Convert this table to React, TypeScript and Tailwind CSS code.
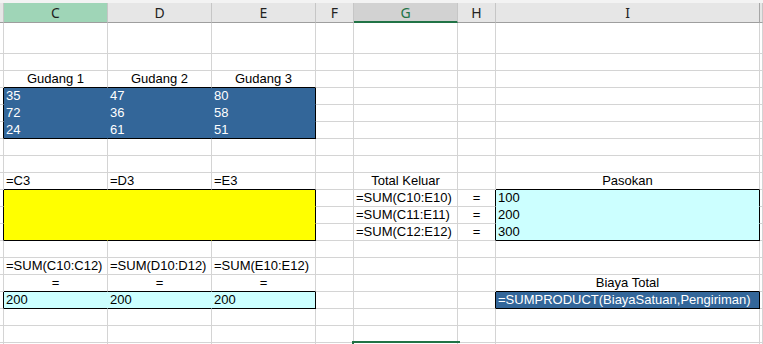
import React from 'react';

type Align = 'left' | 'center';
type Cell = { text: string; align?: Align };

type Box = {
  r0: number;
  r1: number;
  c0: number;
  c1: number;
  fill: string;
  innerR: string;
  innerB: string;
  ink: string;
};

// column B stub, C..I, then the sliver of J
const COL_W = [
  'w-[4px]',
  'w-[104px]',
  'w-[104px]',
  'w-[104px]',
  'w-[38px]',
  'w-[104px]',
  'w-[38px]',
  'w-[264px]',
  'flex-1',
];
const COL_NAMES = ['', 'C', 'D', 'E', 'F', 'G', 'H', 'I', ''];
const ROW_COUNT = 19;

const BOXES: Box[] = [
  { r0: 4, r1: 6, c0: 1, c1: 3, fill: 'bg-[#336699]', innerR: 'border-r-[#336699]', innerB: 'border-b-[#336699]', ink: 'text-white' },
  { r0: 10, r1: 12, c0: 1, c1: 3, fill: 'bg-[#ffff00]', innerR: 'border-r-[#ffff00]', innerB: 'border-b-[#ffff00]', ink: 'text-black' },
  { r0: 10, r1: 12, c0: 7, c1: 7, fill: 'bg-[#ccffff]', innerR: 'border-r-[#ccffff]', innerB: 'border-b-[#ccffff]', ink: 'text-black' },
  { r0: 16, r1: 16, c0: 1, c1: 3, fill: 'bg-[#ccffff]', innerR: 'border-r-[#ccffff]', innerB: 'border-b-[#ccffff]', ink: 'text-black' },
  { r0: 16, r1: 16, c0: 7, c1: 7, fill: 'bg-[#336699]', innerR: 'border-r-[#336699]', innerB: 'border-b-[#336699]', ink: 'text-white' },
];

const CELLS: Record<string, Cell> = {
  '3-1': { text: 'Gudang 1', align: 'center' },
  '3-2': { text: 'Gudang 2', align: 'center' },
  '3-3': { text: 'Gudang 3', align: 'center' },
  '4-1': { text: '35' },
  '4-2': { text: '47' },
  '4-3': { text: '80' },
  '5-1': { text: '72' },
  '5-2': { text: '36' },
  '5-3': { text: '58' },
  '6-1': { text: '24' },
  '6-2': { text: '61' },
  '6-3': { text: '51' },
  '9-1': { text: '=C3' },
  '9-2': { text: '=D3' },
  '9-3': { text: '=E3' },
  '9-5': { text: 'Total Keluar', align: 'center' },
  '9-7': { text: 'Pasokan', align: 'center' },
  '10-5': { text: '=SUM(C10:E10)' },
  '10-6': { text: '=', align: 'center' },
  '10-7': { text: '100' },
  '11-5': { text: '=SUM(C11:E11)' },
  '11-6': { text: '=', align: 'center' },
  '11-7': { text: '200' },
  '12-5': { text: '=SUM(C12:E12)' },
  '12-6': { text: '=', align: 'center' },
  '12-7': { text: '300' },
  '14-1': { text: '=SUM(C10:C12)' },
  '14-2': { text: '=SUM(D10:D12)' },
  '14-3': { text: '=SUM(E10:E12)' },
  '15-1': { text: '=', align: 'center' },
  '15-2': { text: '=', align: 'center' },
  '15-3': { text: '=', align: 'center' },
  '15-7': { text: 'Biaya Total', align: 'center' },
  '16-1': { text: '200' },
  '16-2': { text: '200' },
  '16-3': { text: '200' },
  '16-7': { text: '=SUMPRODUCT(BiayaSatuan,Pengiriman)' },
};

function boxAt(r: number, c: number) {
  return BOXES.find((b) => r >= b.r0 && r <= b.r1 && c >= b.c0 && c <= b.c1);
}

// Excel draws a box edge on the shared gridline, so the neighbour's border turns black too
function edgeRight(r: number, c: number) {
  const b = boxAt(r, c);
  const next = boxAt(r, c + 1);
  if (b && c === b.c1) return 'border-r-black';
  if (next && next !== b) return 'border-r-black';
  if (b) return b.innerR;
  return 'border-r-[#d4d4d4]';
}

function edgeBottom(r: number, c: number) {
  const b = boxAt(r, c);
  const below = boxAt(r + 1, c);
  if (b && r === b.r1) return 'border-b-black';
  if (below && below !== b) return 'border-b-black';
  if (b) return b.innerB;
  return 'border-b-[#d4d4d4]';
}

function HeaderRow() {
  return (
    <div className="flex h-[23px] bg-[#f3f3f3] pt-[3px]">
      {COL_NAMES.map((name, c) => {
        const tone =
          c === 1
            ? 'bg-[#9fd5b7] text-[#1e1e1e] border-b-[#9e9e9e]'
            : c === 5
              ? 'bg-[#d2d2d2] text-[#217346] border-b-2 border-b-[#217346]'
              : 'bg-[#e6e6e6] text-[#222222] border-b-[#9e9e9e]';
        const sep = c === 7 ? 'border-r-[#a6a6a6]' : 'border-r-[#c6c6c6]';
        return (
          <div
            key={c}
            className={`flex h-full shrink-0 items-center justify-center border-r border-b font-['Noto_Sans',sans-serif] text-[14px] ${COL_W[c]} ${tone} ${sep}`}
          >
            {name}
          </div>
        );
      })}
    </div>
  );
}

function SheetRow({ r }: { r: number }) {
  const height = r === 1 ? 'h-[31px]' : 'h-[17px]';
  return (
    <div className={`flex ${height}`}>
      {COL_W.map((w, c) => {
        const box = boxAt(r, c);
        const cell = CELLS[`${r}-${c}`];
        const selected = r === 19 && c === 5;
        return (
          <div
            key={c}
            className={`relative flex h-full shrink-0 items-end border-r border-b ${w} ${
              box ? `${box.fill} ${box.ink}` : 'bg-white text-black'
            } ${edgeRight(r, c)} ${edgeBottom(r, c)} ${
              cell?.align === 'center' ? 'justify-center' : 'justify-start pl-[2px]'
            }`}
          >
            {cell && <span className="whitespace-nowrap leading-[16px]">{cell.text}</span>}
            {selected && (
              <div className="absolute -left-[2px] -top-[2px] h-[22px] w-[108px] border-2 border-[#217346]" />
            )}
          </div>
        );
      })}
    </div>
  );
}

export default function App() {
  const rows = Array.from({ length: ROW_COUNT }, (_, i) => i + 1);
  return (
    <div className="h-[344px] w-[763px] overflow-hidden bg-white font-['Liberation_Sans',Arial,sans-serif] text-[13px]">
      <HeaderRow />
      {rows.map((r) => (
        <SheetRow key={r} r={r} />
      ))}
    </div>
  );
}
